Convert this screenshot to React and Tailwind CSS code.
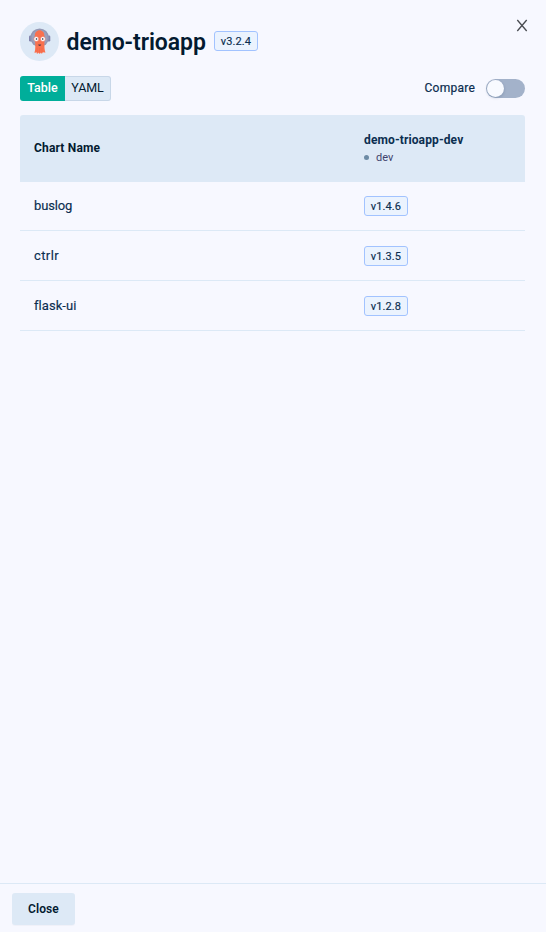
import { useState } from "react";

const charts = [
  { name: "buslog", version: "v1.4.6", nameSpacing: "tracking-[-0.15px]" },
  { name: "ctrlr", version: "v1.3.5", nameSpacing: "tracking-[0.4px]" },
  { name: "flask-ui", version: "v1.2.8", nameSpacing: "tracking-[0.05px]" },
];

function ArgoLogo() {
  return (
    <svg viewBox="0 0 39 39" className="size-[39px] shrink-0">
      <circle cx="19.5" cy="19.5" r="19.5" fill="#dde9f6" />
      <rect x="9" y="13.500" width="3" height="6" rx="1.200" fill="#8385ae" />
      <rect x="27.300" y="13.500" width="3" height="6" rx="1.200" fill="#8385ae" />
      <circle cx="19.600" cy="15.700" r="9.300" fill="#9498b4" />
      <circle cx="19.600" cy="15.700" r="7.800" fill="#9ba2be" />
      <path
        d="M14.800 14c0-3.500 1.900-5.700 4.800-5.700s4.800 2.200 4.800 5.700v9.500c0 3 .4 5.500 1.100 6.900-1.200.4-2 .2-2.500-.4-.4.900-.7 1.500-1.300 1.500-.6 0-.9-.4-1-1-.3.800-.6 1.200-1.200 1.200s-.9-.4-1.100-1.100c-.3.700-.7 1.200-1.400 1.100-.4-.5-.5-1.100-.5-1.700-.5.600-1.300.900-2.100.4.700-1.500.9-3.700.9-6.700z"
        fill="#f9714f"
      />
      <path d="M17.200 26v4M19.600 26v4.500M22 26v4" stroke="#ee6146" strokeWidth=".5" />
      <circle cx="16.300" cy="17" r="2.500" fill="#fff" stroke="#e9604a" strokeWidth=".5" />
      <circle cx="22.900" cy="17" r="2.500" fill="#fff" stroke="#e9604a" strokeWidth=".5" />
      <circle cx="16.500" cy="17" r=".8" fill="#16203b" />
      <circle cx="22.700" cy="17" r=".8" fill="#16203b" />
      <path d="M18.200 22.500h3c-.1 1-.7 1.400-1.500 1.400s-1.400-.4-1.500-1.400z" fill="#5a3a42" />
    </svg>
  );
}

function Version({ children }) {
  return (
    <span className="flex h-5 w-11 items-center justify-center rounded-[3px] border border-[#a2c3ff] bg-[#ebf3fe] pt-px text-[11px] leading-none tracking-[0.1px] text-[#0b2e50] [-webkit-text-stroke:0.15px_#0b2e50]">
      {children}
    </span>
  );
}

export default function App() {
  const [compare, setCompare] = useState(false);
  return (
    <div className="flex h-screen flex-col bg-[#f7f8ff] font-[Roboto,sans-serif] text-[13px] text-[#0b2e50]">
      <header className="flex h-[76px] items-start justify-between pt-[22px] pr-[18px] pl-5">
        <div className="flex h-[39px] items-center">
          <ArgoLogo />
          <h1 className="ml-[7.5px] w-[139.5px] pt-0.5 text-[23px] leading-none font-semibold tracking-[-0.05px] whitespace-nowrap text-[#031a30]">
            demo-trioapp
          </h1>
          <div className="ml-2 pb-px">
            <Version>v3.2.4</Version>
          </div>
        </div>
        <button aria-label="Close panel" className="-mt-2.5 pt-1.5">
          <svg viewBox="0 0 12 14" className="h-[14px] w-3" fill="none" stroke="#484b50" strokeWidth="1.3">
            <path d="M1.300 2 10.700 13M10.700 2 1.300 13" />
          </svg>
        </button>
      </header>

      <div className="flex h-[25px] items-center justify-between pr-[21px] pl-5">
        <div className="flex h-[25px] w-[91px]">
          <button className="w-[45px] rounded-l-[3px] bg-[#00ae9a] text-[12.5px] leading-none font-medium tracking-[0.05px] text-white">
            Table
          </button>
          <button className="w-[46px] rounded-r-[3px] border border-l-0 border-[#c8d7e8] bg-[#dde9f6] text-[12.5px] leading-none tracking-[-0.1px] text-[#031a30]">
            YAML
          </button>
        </div>
        <div className="flex items-center gap-[11px]">
          <span className="pb-0.5 text-[12px] tracking-[0.25px] [-webkit-text-stroke:0.2px_#0b2e50]">Compare</span>
          <button
            role="switch"
            aria-checked={compare}
            aria-label="Compare"
            onClick={() => setCompare(!compare)}
            className={`flex h-[19px] w-[39px] items-center rounded-full bg-[#a3b2ca] px-px ${compare ? "justify-end" : ""}`}
          >
            <span className="size-[17px] rounded-full bg-[#f8faff] shadow-[0_1px_3px_#00234b33]" />
          </button>
        </div>
      </div>

      <main className="flex-1 pt-[14px] pr-[21px] pl-5">
        <div className="grid h-[67px] grid-cols-[344px_1fr] items-center rounded-t-[3px] bg-[#dde9f6]">
          <div className="pb-0.5 pl-[14px] text-[12px] font-bold tracking-[0.17px] text-[#031a30]">Chart Name</div>
          <div className="pb-px">
            <div className="text-[12px] leading-[18px] font-bold tracking-[0.12px]">demo-trioapp-dev</div>
            <div className="flex items-center gap-[7px] text-[11px] leading-[17px] text-[#3e426c]">
              <span className="size-[5px] rounded-full bg-[#6d8ba5]" />
              dev
            </div>
          </div>
        </div>
        {charts.map((chart, i) => (
          <div
            key={chart.name}
            className={`grid grid-cols-[344px_1fr] items-center border-b border-[#dce9f6] ${i === 0 ? "h-[49px]" : "h-[50px]"}`}
          >
            <div className={`pl-[14px] [-webkit-text-stroke:0.15px_#0b2e50] ${chart.nameSpacing}`}>{chart.name}</div>
            <Version>{chart.version}</Version>
          </div>
        ))}
      </main>

      <footer className="h-[49px] border-t border-[#dce9f6] pt-[9px] pl-3">
        <button className="h-8 w-[63px] rounded-[3px] bg-[#dde9f6] text-[12px] font-semibold tracking-[0.1px] text-[#031a30] shadow-[0_1px_1px_#00234b08]">
          Close
        </button>
      </footer>
    </div>
  );
}
